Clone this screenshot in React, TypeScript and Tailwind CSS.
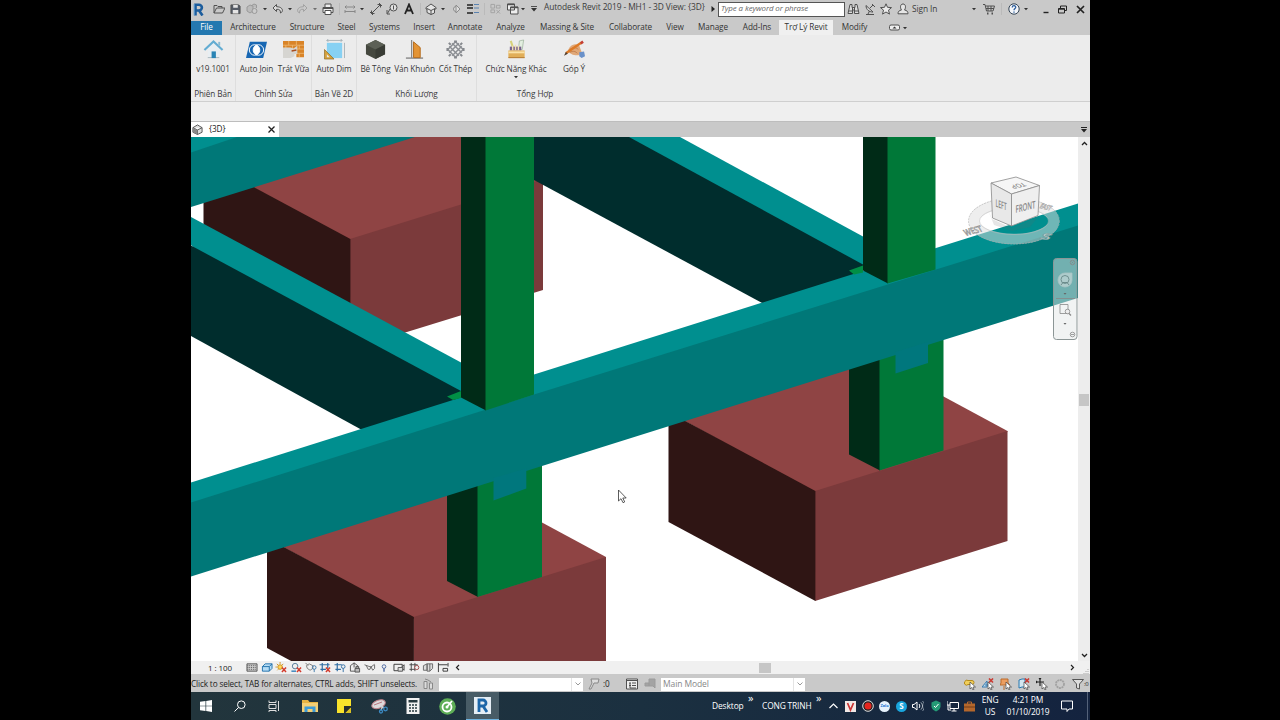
import type { ReactNode } from "react";
import clsx from "clsx";

interface IconProps {
  className?: string;
  children?: ReactNode;
  box?: string;
}

// Line icon on a 12x12 grid
function Icon({ className, children, box = "0 0 12 12" }: IconProps) {
  return (
    <svg className={clsx("shrink-0", className)} viewBox={box} fill="none" stroke="#505050" strokeWidth="1">
      {children}
    </svg>
  );
}

function Caret({ className }: { className?: string }) {
  return (
    <Icon className={clsx("w-1 h-1", className)} box="0 0 4 4">
      <path d="M0 1h4L2 3.2z" fill="#333" stroke="none" />
    </Icon>
  );
}

function Divider({ className }: { className?: string }) {
  return <div className={clsx("w-px h-3 shrink-0 bg-[#bababa]", className)} />;
}

function TitleBar() {
  return (
    <div className="h-[18px] flex items-center bg-[#c9c9c9] text-[#3c3c3c]">
      <Icon className="w-[11px] h-[13px] ml-[2px]" box="0 0 11 13">
        <path d="M2.5 12.500V1.700H6a2.9 2.9 0 010 5.8H3M6 7.400L9.500 12.500" stroke="#1c5d9d" strokeWidth="2.6" />
        <path d="M1.200 1v11.500" stroke="#5b9bd2" />
      </Icon>
      <Icon className="w-3 h-3 ml-[9px]">
        <path d="M1 10V2.5h3l1 1h4V5M1 10l2.5-5H12l-2.5 5z" />
      </Icon>
      <Icon className="w-[11px] h-3 ml-[5px]">
        <path d="M1 1.5h8.5L11 3v8H1z" fill="#555b66" />
        <path d="M3.5 1.5h5v3h-5zM3 7h6v4H3z" fill="#e4e4e4" stroke="none" />
      </Icon>
      <Icon className="w-3 h-3 ml-[5px]">
        <path d="M1 4l3-2 3 1v5L4 10 1 8zM5 3l3-2 2.500 1v3" stroke="#999" fill="#bbb" />
        <circle cx="8.500" cy="8" r="2.500" stroke="#999" fill="#ccc" />
      </Icon>
      <Caret className="ml-[5px]" />
      <Icon className="w-3 h-3 ml-[5px]">
        <path d="M4.500 1.500L1 5l3.500 3.500V6.300c3-.3 4 .7 4 3.700C11.500 9 11.500 3.800 4.500 3.700z" fill="#ddd" />
      </Icon>
      <Caret className="ml-1" />
      <Icon className="w-3 h-3 ml-1">
        <path d="M7.500 1.500L11 5 7.500 8.500V6.300c-3-.3-4 .7-4 3.700C.500 9 .500 3.800 7.500 3.700z" stroke="#a2a2a2" />
      </Icon>
      <Caret className="ml-[5px] opacity-60" />
      <Icon className="w-3 h-3 ml-[5px]">
        <path d="M3 4V1h6v3M1 4.500h10v5H1z" fill="#eee" />
        <path d="M3 7.500h6v4H3z" fill="#fff" />
        <path d="M1 5.500h10" />
      </Icon>
      <Divider className="ml-[5px]" />
      <Icon className="w-3 h-3 ml-1">
        <path d="M1 4h10M1 8.500h10M2.500 2.500L1 4l1.500 1.500M9.500 2.500L11 4 9.500 5.500M1 7v3M11 7v3" stroke="#888" />
      </Icon>
      <Caret className="ml-1" />
      <Icon className="w-3 h-3 ml-1.5">
        <path d="M1.500 10.500l9-9M1.500 7.500v3h3M7.500 1.500h3v3M0 9l3 3M9 0l3 3" />
      </Icon>
      <Icon className="w-3 h-3 ml-1">
        <circle cx="7.500" cy="4.500" r="3.500" fill="#e2e2e2" />
        <path d="M7.500 2.500v4M4 6L1.500 10.500M1 7v4h3" />
      </Icon>
      <Icon className="w-2.5 h-3 ml-1.5" box="0 0 10 12">
        <path d="M1 11L5 1.500 9 11M2.500 7.500h5" stroke="#222" strokeWidth="1.800" />
      </Icon>
      <Divider className="ml-1.5" />
      <Icon className="w-3 h-3 ml-1">
        <path d="M1 4.500L6 1l5 3.500V6H9.500v4L6 11.500 2 9.500V6H1z" fill="#e4e4e4" />
        <path d="M2 5.500l4 2 4-2M6 7.500v4" />
      </Icon>
      <Caret className="ml-1" />
      <Icon className="w-2.5 h-3 ml-1.5" box="0 0 10 12">
        <path d="M5 2v8L9 6zM5 3.500a2.500 2.500 0 000 5" stroke="#8c8c8c" fill="#ddd" />
      </Icon>
      <Icon className="w-3 h-3 ml-1.5">
        <path d="M0 2h6M0 5h6M0 10h6" stroke="#222" strokeWidth="1.700" />
        <path d="M7 1.500h5M7 5h5M7 9.500h5" stroke="#5b83b0" />
      </Icon>
      <Divider className="ml-[5px]" />
      <Icon className="w-[11px] h-3 ml-[5px]">
        <path d="M1 1h4v4H1zM7 2h4v3H7zM1 7h4v3H1zM7 7l4 4M11 7l-4 4" stroke="#a2a2a2" />
      </Icon>
      <Icon className="w-[13px] h-3 ml-[5px]">
        <path d="M1 1h7v6H1zM4 4h7.500v7H4z" fill="#eee" />
        <path d="M1 1.500h7M4 4.500h7.500" strokeWidth="1.600" />
      </Icon>
      <Caret className="ml-0.5" />
      <Icon className="w-1.5 h-1.5 ml-1.5" box="0 0 6 6">
        <path d="M0 .5h6" />
        <path d="M0 2h6L3 5.500z" fill="#333" stroke="none" />
      </Icon>
      <div className="w-[161px] ml-[7px] shrink-0 pb-[3px] text-[8.4px] whitespace-nowrap">Autodesk Revit 2019 - MH1 - 3D View: {"{3D}"}</div>
      <Icon className="w-1 h-1.5 ml-1.5" box="0 0 4 6">
        <path d="M.5 0v6L4 3z" fill="#222" stroke="none" />
      </Icon>
      <div className="w-[127px] h-[15px] ml-[3px] shrink-0 flex items-center bg-white border border-[#555] pl-0.5 text-[7.9px] italic text-[#666]">
        Type a keyword or phrase
      </div>
      <Icon className="w-[13px] h-3 ml-0.5">
        <path d="M2.500 1.500h2v3h3v-3h2L11.500 10.500H7V7H5v3.500H.5zM5 5v2M7 5v2M1 8h4M7 8h4" fill="#ddd" />
      </Icon>
      <Icon className="w-3 h-3 ml-1">
        <path d="M2 2.500c0 4 3 6.500 7 6.500zM2 11.500h8M5.500 8L4 11M6 5l3-3M8 1l3 3" fill="#ddd" />
      </Icon>
      <Icon className="w-3 h-3 ml-1">
        <path d="M6 .8l1.500 3.500 4 .3-3 2.500 1 4L6 9l-3.500 2.100 1-4-3-2.500 4-.3z" fill="#ececec" />
      </Icon>
      <Icon className="w-3 h-3 ml-[5px]">
        <path d="M6 1C3 1 3 5 4.500 7 2 7.500 1 8.500 1 10.800h10C11 8.500 10 7.500 7.500 7 9 5 9 1 6 1z" fill="#e6e6e6" />
      </Icon>
      <div className="w-[60px] ml-[3px] shrink-0 text-[8.400px]">Sign In</div>
      <Caret />
      <Icon className="w-3 h-3 ml-[7px]">
        <path d="M0 1.500h2l1.500 6.500H10l1.500-5h-9M3 5.500h8M5 3v5M8 3v5" />
        <path d="M4 10.500h1.500M8.500 10.500H10" strokeWidth="1.800" />
      </Icon>
      <Divider className="ml-1.5" />
      <Icon className="w-3 h-3 ml-1.5">
        <circle cx="6" cy="6" r="5.200" fill="#f4f6fa" stroke="#345" />
        <path d="M4.200 4.500C4.300 2 8 2.200 7.700 4.500 7.600 5.500 6 5.800 6 7.300M6 8.500v1.300" stroke="#2d5f9e" strokeWidth="1.300" />
      </Icon>
      <Caret className="ml-1" />
      <Icon className="w-2 h-3 ml-[14px]" box="0 0 8 12">
        <path d="M1.500 9.500h5" stroke="#222" strokeWidth="1.400" />
      </Icon>
      <Icon className="w-[9px] h-[9px] ml-2" box="0 0 9 9">
        <path d="M2.500 3V1h6v4.500h-2M.5 3.500h6V8h-6zM.5 4.200h6" stroke="#222" />
      </Icon>
      <Icon className="w-[9px] h-[9px] ml-[9px]" box="0 0 9 9">
        <path d="M1 1l7 7M8 1L1 8" stroke="#222" strokeWidth="1.700" />
      </Icon>
    </div>
  );
}

const tabs = [
  { label: "Architecture", width: "w-[60px]" },
  { label: "Structure", width: "w-[48px]" },
  { label: "Steel", width: "w-[31px]" },
  { label: "Systems", width: "w-[45px]" },
  { label: "Insert", width: "w-[34px]" },
  { label: "Annotate", width: "w-[48px]" },
  { label: "Analyze", width: "w-[43px]" },
  { label: "Massing & Site", width: "w-[70px]" },
  { label: "Collaborate", width: "w-[57px]" },
  { label: "View", width: "w-[32px]" },
  { label: "Manage", width: "w-[44px]" },
  { label: "Add-Ins", width: "w-[44px]" },
  { label: "Trợ Lý Revit", width: "w-[54px]", active: true },
  { label: "Modify", width: "w-[43px]" },
];

function RibbonTabs() {
  return (
    <div className="h-[17px] flex items-end bg-[#c9c9c9] text-[8.2px] text-[#333]">
      <div className="w-[31px] h-[14px] mr-px pb-px flex items-center justify-center bg-[#2478b0] text-white">File</div>
      {tabs.map((tab) => (
        <div
          key={tab.label}
          className={clsx(
            "flex shrink-0 items-center justify-center whitespace-nowrap",
            tab.width,
            tab.active ? "h-[15px] bg-[#f0f0f0]" : "h-[14px] pb-px",
          )}
        >
          {tab.label}
        </div>
      ))}
      <Icon className="w-[11px] h-[14px] ml-[13px]" box="0 0 11 14">
        <rect x=".5" y="4" width="10" height="5" rx="1.500" fill="#eee" />
        <path d="M3.500 7.500h4l-2-2z" fill="#333" stroke="none" />
      </Icon>
      <Caret className="ml-[3px] mb-[5px]" />
    </div>
  );
}

function RibbonButton({ label, width, caret, children }: { label: string; width: string; caret?: boolean; children: ReactNode }) {
  return (
    <div className={clsx("flex flex-col items-center shrink-0", width)}>
      <svg className="w-[21px] h-[21px] mb-px" viewBox="0 0 22 22" fill="none">
        {children}
      </svg>
      <div className="h-3 mt-[2px] leading-3 whitespace-nowrap">{label}</div>
      {caret && <Caret />}
    </div>
  );
}

function RibbonPanel({ title, width, last, children }: { title: string; width: string; last?: boolean; children: ReactNode }) {
  return (
    <div className={clsx("h-full flex flex-col justify-between pt-1", width, !last && "border-r border-[#dedede]")}>
      <div className="flex justify-center">{children}</div>
      <div className="text-center leading-[14px] whitespace-nowrap">{title}</div>
    </div>
  );
}

function Ribbon() {
  return (
    <>
      <div className="h-[67px] flex bg-[#ececec] border-b border-[#cfcfcf] text-[8.2px] text-[#3a3a3a]">
        <RibbonPanel title="Phiên Bản" width="w-[45px]">
          <RibbonButton label="v19.1001" width="w-10">
            <path d="M5 10v10h12V10l-6-6z" fill="#e8eef2" />
            <path d="M5 19.500h12" stroke="#a7b4bb" />
            <path d="M1.500 11.500L11 2.500l9.500 9" stroke="#62acd2" strokeWidth="2.200" />
            <path d="M9 13h4.500v7H9z" fill="#2984b5" />
            <path d="M16 3h2v4h-2z" fill="#8bbad2" />
          </RibbonButton>
        </RibbonPanel>
        <RibbonPanel title="Chỉnh Sửa" width="w-[76px]">
          <RibbonButton label="Auto Join" width="w-10">
            <path d="M4 3h18l-4 17H0z" fill="#1767b3" />
            <circle cx="9" cy="11.500" r="5.500" fill="#1767b3" stroke="#fff" />
            <circle cx="13" cy="11.500" r="5.500" stroke="#fff" />
            <path d="M11 6c4.500 3 4.500 8 0 11-4.500-3-4.500-8 0-11z" fill="#fff" />
          </RibbonButton>
          <RibbonButton label="Trát Vữa" width="w-[34px]">
            <path d="M0 2h22v17h-8v-5H0z" fill="#d98428" />
            <path d="M0 6.500h22M0 10.500h22M10 15h12M6 2v4.500M14 2v4.500M3 6.500v4M10 6.500v4M17 6.500v4M17 15v4" stroke="#f0bd78" strokeWidth=".8" />
            <path d="M0 9h8l3 1 4-3v9l-3-1v3l-4 2H0z" fill="#d6d5d1" />
            <path d="M9 12.500l5-1" stroke="#a84d20" strokeWidth="1.500" />
          </RibbonButton>
        </RibbonPanel>
        <RibbonPanel title="Bản Vẽ 2D" width="w-[45px]">
          <RibbonButton label="Auto Dim" width="w-10">
            <path d="M3 4h16v16H3z" fill="#87d1f3" />
            <path d="M3 1.500h16M4.500 0L3 1.500 4.500 3M17.500 0L19 1.500 17.500 3M21.500 4v16" stroke="#8d9ba2" strokeWidth=".7" />
            <path d="M.5 11v10h10z" fill="#d4a13c" stroke="#8b6824" strokeWidth=".7" />
            <path d="M3 16v3h3z" fill="#ececec" />
          </RibbonButton>
        </RibbonPanel>
        <RibbonPanel title="Khối Lượng" width="w-[120px]">
          <RibbonButton label="Bê Tông" width="w-[37px]">
            <path d="M11 1l10 5v10l-10 5-10-5V6z" fill="#45483f" />
            <path d="M1 6l10 5 10-5-10-5z" fill="#5c6056" />
            <path d="M11 11v10l10-5V6z" fill="#393c35" />
          </RibbonButton>
          <RibbonButton label="Ván Khuôn" width="w-[41px]">
            <path d="M8 1v19" stroke="#888" strokeWidth="1.300" />
            <path d="M2 20h18" stroke="#888" strokeWidth="1.500" />
            <path d="M10 3l7 6v10.500h-7z" fill="#e39435" stroke="#b36b1c" />
          </RibbonButton>
          <RibbonButton label="Cốt Thép" width="w-[41px]">
            <path d="M11 3l8 8-8 8-8-8zM7.500 4.500l10 10M4.500 7.500l10 10M14.500 4.500l-10 10M17.500 7.500l-10 10" stroke="#8b8e93" strokeWidth="1.500" />
            <path d="M9.500 2.500h3M9.500 19.500h3M2.500 9.500v3M19.500 9.500v3M4 4l2 2M18 4l-2 2M4 18l2-2M18 18l-2-2" stroke="#85888d" strokeWidth="2" />
          </RibbonButton>
        </RibbonPanel>
        <RibbonPanel title="Tổng Hợp" width="w-[116px]" last>
          <RibbonButton label="Chức Năng Khác" width="w-[78px]" caret>
            <path d="M5 2l3 9" stroke="#d8d17a" strokeWidth="2.200" />
            <path d="M14 2l4.500-1-1.500 10h-4z" fill="#e3eee0" stroke="#8aa68a" strokeWidth=".6" />
            <path d="M4 8h12v4H4z" fill="#77628c" />
            <path d="M7 7v5M10 6v6M13 7v5" stroke="#f1dfb4" strokeWidth="1.500" />
            <path d="M2.500 12h17v8h-17z" fill="#e1ae58" />
            <path d="M2.500 14h17" stroke="#fae2a8" strokeWidth="2" />
            <path d="M2.500 19.500h17" stroke="#b57b35" />
          </RibbonButton>
          <RibbonButton label="Góp Ý" width="w-[38px]">
            <path d="M4 12c3-6 7-8 12-5l3 8-4 2c-4 0-8 0-11-5z" fill="#e0a878" />
            <path d="M6 11c4-3 7-2 9 0M6 14c4-2 6-1 8 1" stroke="#b9733f" strokeWidth=".8" />
            <path d="M2 15L18 4" stroke="#dd7a26" strokeWidth="2.500" />
            <path d="M17.500 4.500l2.500-1.700" stroke="#c43e34" strokeWidth="2.800" />
            <path d="M0 17.500l2-4 2 2z" fill="#4b3a2b" />
            <path d="M16 14l5-1 1 5-3.500 2-2.500-2z" fill="#6a91c9" />
          </RibbonButton>
        </RibbonPanel>
      </div>
      <div className="h-[19px] bg-[#efefef]" />
    </>
  );
}

function ViewTabs() {
  return (
    <div className="h-4 flex items-center bg-[#c9c9c9] border-t border-[#bdbdbd]">
      <div className="w-[88px] h-full flex items-center bg-white text-[8.2px] text-[#222]">
        <Icon className="w-[11px] h-[11px] ml-[1px]">
          <path d="M1 4l5-3 5 3v5l-5 2.500L1 9zM1 4l5 2.500L11 4M6 6.500v5" fill="#ddd" />
          <path d="M1 4l5 2.500v5L1 9z" fill="#888" stroke="none" />
        </Icon>
        <div className="w-[59px] ml-[6px] font-medium">{"{3D}"}</div>
        <Icon className="w-[7px] h-[7px]" box="0 0 7 7">
          <path d="M.5.5l6 6M6.500.5l-6 6" stroke="#222" strokeWidth="1.300" />
        </Icon>
      </div>
      <Icon className="w-[6px] h-[6px] ml-auto mr-[3px]" box="0 0 6 6">
        <path d="M0 .5h6" stroke="#222" />
        <path d="M0 2h6L3 5.500z" fill="#222" stroke="none" />
      </Icon>
    </div>
  );
}

function Viewport() {
  return (
    <svg className="w-[887px] h-[524px] shrink-0 bg-white" viewBox="191 137 887 524">
      {/* rear footing */}
      <path d="M203.500 160L350 241l193-60V179L396 100z" fill="#8f4444" />
      <path d="M350 239l193-60v111l-193 59.500z" fill="#7b3a3b" />
      <path d="M203.500 160L350.400 239v110l-146.900-79z" fill="#2f1514" />
      {/* rear beam */}
      <path d="M191 137h224L191 207z" fill="#007878" />
      <path d="M191 137h46l-46 15.500z" fill="#008f8f" />
      {/* left cross beam */}
      <path d="M191 217l271 146v45l-60 20L191 245z" fill="#008f8f" />
      <path d="M191 245.500L461 391v20l-99 19L191 336z" fill="#002d2d" />
      {/* right cross beam */}
      <path d="M626 137h54l183 99.500V275z" fill="#008f8f" />
      <path d="M534 137h95l234 127.500V275l-99 29-230-124z" fill="#002d2d" />
      {/* front footings */}
      <path d="M267 538l146.500 81L606 558V557l-146.500-79z" fill="#8f4444" />
      <path d="M413.500 617L606 557v110H413.500z" fill="#7b3a3b" />
      <path d="M267 538l146.900 79v110L267 648z" fill="#2f1514" />
      <path d="M668.500 412L815 493l192.500-61V431L861 352z" fill="#8f4444" />
      <path d="M815 491l192.500-60v110L815 601z" fill="#7b3a3b" />
      <path d="M668.500 412L815.400 491v110l-146.900-79z" fill="#2f1514" />
      {/* lower columns */}
      <path d="M447 480h31v117l-31-16z" fill="#002b17" />
      <path d="M477.500 460H542v117l-64.500 20z" fill="#007838" />
      <path d="M849 350h31v120.500l-31-16z" fill="#002b17" />
      <path d="M879.500 330h64v120.500l-64 20z" fill="#007838" />
      {/* main beam */}
      <path d="M191 482.500l343-108L936 248l142-44.500V240L191 520z" fill="#008f8f" />
      <path d="M191 502.500l343-108L936 269.500l142-44v72.500L943.500 340 542 466 191 576.500z" fill="#007878" />
      <path d="M493.500 478v22.500l32.800-12v-20zM895.500 352v21.500l32.500-10.500v-21z" fill="#00777d" />
      <path d="M447 396.500l14-5.500v7l-8 2zM849 270.500l14-5v7l-9 2z" fill="#008f45" />
      {/* upper columns */}
      <path d="M461 137h25v273.500l-25-13z" fill="#002b17" />
      <path d="M485.500 137H534v257.500l-48.500 16z" fill="#007838" />
      <path d="M863 137h25v146.500l-25-13z" fill="#002b17" />
      <path d="M887.500 137h48v132.500l-48 14z" fill="#007838" />

      {/* view cube */}
      <ellipse cx="1014" cy="221" rx="40" ry="18" stroke="#ddd" strokeWidth="10.500" strokeOpacity=".5" fill="none" />
      <ellipse cx="1014" cy="221" rx="45.500" ry="23" stroke="#aaa" strokeWidth=".6" fill="none" strokeDasharray="2 1" />
      <ellipse cx="1014" cy="221" rx="34.500" ry="13.500" stroke="#bbb" strokeWidth=".5" fill="none" />
      <path d="M988 210l4 9 20 9 26-11-8 10-18 4-18-6z" fill="#666" fillOpacity=".16" />
      <g stroke="#8a8a8a" strokeWidth=".8" strokeLinejoin="round">
        <path d="M991 183l25-6 23.500 8.500-28 8.500z" fill="#f6f6f6" />
        <path d="M991 183l20.500 11v32l-19-8z" fill="#e8e8e8" />
        <path d="M1011.500 194l28-8.500-1.500 30-26.500 10.500z" fill="#efefef" />
      </g>
      <g fill="#888" fontSize="9" fontWeight="600" fontFamily="Open Sans, sans-serif">
        <text transform="matrix(.58 .2 0 1.150 995.500 206.500)">LEFT</text>
        <text transform="matrix(.68 -.17 0 1.150 1015.500 213)">FRONT</text>
        <text transform="matrix(-.75 .17 -.6 -.55 1023 182.500)">TOP</text>
        <text transform="matrix(.75 -.2 .5 .9 966 236)" fill="#ccc" stroke="#888" strokeWidth=".5">WEST</text>
        <text transform="matrix(.6 .14 -.5 .8 1039 208)" fontSize="8" fill="#ccc" stroke="#999" strokeWidth=".4">EAST</text>
        <text transform="matrix(2 .3 -.7 .85 1039 238.500)" fill="#c8dcdc" stroke="#7b9a9a" strokeWidth=".5">S</text>
      </g>

      {/* navigation bar */}
      <rect x="1053.500" y="258.500" width="23.500" height="81" rx="3" fill="#e4e8e8" fillOpacity=".5" stroke="#8c9696" />
      <g fill="none" stroke="#888" strokeWidth=".8">
        <circle cx="1072.500" cy="262.500" r="2.300" />
        <path d="M1071.500 261.500l2 2M1073.500 261.500l-2 2" />
        <path d="M1065 273h7v7a7 7 0 11-7-7z" fill="#c8d8d8" fillOpacity=".7" stroke="#a9c4c4" />
        <circle cx="1065" cy="279.500" r="4" stroke="#5f8080" />
        <path d="M1061 285l2-2.500h4l2 2.500" stroke="#5f8080" />
        <path d="M1056 298.500h19M1060 304.500h8v9h-8z" />
        <circle cx="1067.500" cy="311.500" r="2.300" fill="#eee" />
        <path d="M1069 313.500l2 2" strokeWidth="1.300" />
        <circle cx="1072.500" cy="334.500" r="2.300" />
        <path d="M1071 334.500h3" />
      </g>
      <path d="M1063.500 293h3l-1.500 1.800zM1063.500 323h3l-1.500 1.800z" fill="#666" />

      {/* cursor */}
      <path d="M618.500 490v11l2.500-2.300 2 4 1.700-.8-1.900-3.900h3.400z" fill="#fff" stroke="#333" strokeWidth=".8" />
    </svg>
  );
}

function VerticalScroll() {
  return (
    <div className="flex-1 flex flex-col items-center justify-between bg-[#ededed] pt-1 pb-[3px]">
      <Icon className="w-[7px] h-[5px]" box="0 0 7 5">
        <path d="M1 4l2.500-2.500L6 4" stroke="#222" strokeWidth="1.300" />
      </Icon>
      <div className="w-2.5 h-3 bg-[#c6c6c6]" />
      <Icon className="w-[7px] h-[5px]" box="0 0 7 5">
        <path d="M1 1l2.500 2.500L6 1" stroke="#222" strokeWidth="1.300" />
      </Icon>
    </div>
  );
}

const redX = <path d="M7 6l4.500 5M11.500 6L7 11" stroke="#d33a2b" strokeWidth="1.600" />;

function ViewControls() {
  return (
    <div className="h-[13px] flex items-center bg-[#f0f0f0] text-[8px] text-[#222]">
      <div className="w-[38px] ml-[17px] shrink-0 whitespace-nowrap">1 : 100</div>
      <div className="flex gap-[2.700px]">
        <Icon className="w-3 h-[11px]">
          <path d="M.5 2h11v8H.5z" fill="#ccc" />
          <path d="M1 4h10M1 6h10M1 8h10" stroke="#555" strokeDasharray="1 1" />
        </Icon>
        <Icon className="w-3 h-[11px]">
          <path d="M1 5l3-3h7.500v5l-3 3H1zM1 5h7.500v5M8.500 5l3-3" fill="#b5dcf5" stroke="#1f6eaa" />
        </Icon>
        <Icon className="w-3 h-[11px]">
          <circle cx="5" cy="5.500" r="2.500" fill="#ffd65a" stroke="#c98b15" />
          <path d="M5 0v2M0 5.500h1.500M1.500 2L3 3.500M8.500 2L7 3.500M2 9l1-1" stroke="#c98b15" />
          {redX}
        </Icon>
        <Icon className="w-3 h-[11px]">
          <circle cx="5" cy="4.500" r="3" stroke="#4d7596" />
          <path d="M1 10h5" stroke="#2c7cb8" strokeWidth="1.500" />
          {redX}
        </Icon>
        <Icon className="w-3 h-[11px]">
          <path d="M1 4l3-2 4 2v3l-3 2-3-2zM0 1l3 3" stroke="#777" />
          <circle cx="9.500" cy="6" r="2" stroke="#3b76a8" />
          <path d="M9.500 8v3" stroke="#3b76a8" />
        </Icon>
        <Icon className="w-3 h-[11px]">
          <path d="M3 1v9M0 3h11M9 1v6M1 8h6" stroke="#2f6da3" strokeWidth="1.300" />
          {redX}
        </Icon>
        <Icon className="w-3 h-[11px]">
          <path d="M3 1v9M0 3h8M1 8h6" stroke="#2f6da3" strokeWidth="1.300" />
          <circle cx="9.500" cy="5" r="2" stroke="#2f6da3" />
          <path d="M9.500 7v4" stroke="#2f6da3" />
        </Icon>
        <Icon className="w-3 h-[11px]">
          <path d="M1 4l4-3 4 3v6H1zM5 1v5" fill="#eee" />
          <path d="M6 7h5v4H6zM7 7V5h3v2" fill="#bbb" />
        </Icon>
        <Icon className="w-3 h-[11px]">
          <path d="M0 3l4 1.500 3 1 4-3M2 4l2 4h2l1-3M7 5l2 4 2-2V3" stroke="#666" />
        </Icon>
        <Icon className="w-3 h-[11px]">
          <circle cx="6" cy="5" r="2" stroke="#4a67a0" />
          <path d="M6 7v3.500" stroke="#4a67a0" strokeWidth="1.500" />
        </Icon>
        <Icon className="w-3 h-[11px]">
          <path d="M.5 2.500h9v7h-9zM9.500 5l2-2v6l-2-2" stroke="#333" />
          <path d="M5 6h5v4H5z" fill="#ddd" stroke="#555" />
        </Icon>
        <Icon className="w-3 h-[11px]">
          <path d="M1 3h9M3 1v9M7 1v9M1 8h6" stroke="#444" />
          <circle cx="9" cy="6" r="2.300" fill="#eee" stroke="#9a4545" />
        </Icon>
        <Icon className="w-3 h-[11px]">
          <path d="M1 4l4-2v7H1zM5 2h6v5L8 10H5zM8 2v8" stroke="#666" fill="#ddd" />
        </Icon>
        <Icon className="w-3 h-[11px]">
          <path d="M1 1v10M11.500 1v4M1 3h10M6 7h5v3H6z" stroke="#333" />
        </Icon>
      </div>
      <Icon className="w-[5px] h-[7px] ml-[6px]" box="0 0 5 7">
        <path d="M4 1L1.500 3.500 4 6" stroke="#222" strokeWidth="1.200" />
      </Icon>
      <div className="w-3 h-2.5 ml-[299px] shrink-0 bg-[#c6c6c6]" />
      <Icon className="w-[5px] h-[7px] ml-auto mr-2" box="0 0 5 7">
        <path d="M1 1l2.500 2.500L1 6" stroke="#222" strokeWidth="1.200" />
      </Icon>
      <Icon className="w-[6px] h-[6px] mr-[1px] self-end" box="0 0 6 6">
        <path d="M5 1v5M3 3v3M1 5v1" stroke="#aaa" strokeDasharray="1 1" />
      </Icon>
    </div>
  );
}

function Combo({ className, text }: { className?: string; text?: string }) {
  return (
    <div className={clsx("w-[144px] h-[13px] shrink-0 flex items-center justify-between bg-white pl-0.5 text-[#888]", className)}>
      <span className="text-[8.5px]">{text}</span>
      <div className="w-3 h-full flex items-center justify-center border-l border-[#e4e4e4]">
        <Icon className="w-[6px] h-1" box="0 0 6 4">
          <path d="M.5.5L3 3 5.500.5" stroke="#999" />
        </Icon>
      </div>
    </div>
  );
}

const pointer = <path d="M6 4v7l1.700-1.500L9 12l1-.5L9 9h2.500z" fill="#fff" stroke="#444" strokeWidth=".7" />;

function StatusBar() {
  return (
    <div className="h-[18px] pt-[2px] flex items-center bg-[#c9c9c9] text-[8.2px] text-[#222]">
      <div className="w-[231px] shrink-0 whitespace-nowrap tracking-[-0.130px]">Click to select, TAB for alternates, CTRL adds, SHIFT unselects.</div>
      <Icon className="w-3 h-3">
        <path d="M2 3.500h3v7H2zM7.500 5h3v6h-3zM3 1l3 1 3 2" stroke="#888" fill="#ddd" />
      </Icon>
      <Combo className="ml-[5px]" />
      <Icon className="w-3 h-3 ml-[5px]">
        <path d="M3 1h8l-1 4H6L3 11H1l3-6z" stroke="#888" fill="#ddd" />
      </Icon>
      <div className="w-[23px] ml-[3px] shrink-0">:0</div>
      <Icon className="w-3 h-3">
        <path d="M.5 1h11v10H.5z" fill="#eee" />
        <path d="M.5 2.500h11M3 5h2M6 5h4M3 7.500h2M6 7.500h4M4 5v5h6" />
      </Icon>
      <Icon className="w-3 h-3 ml-[6px]">
        <path d="M1 5h4v3H1zM5 1h6v9L9 8H5z" stroke="#9b9b9b" fill="#a3a3a3" />
      </Icon>
      <Combo className="ml-[5px]" text="Main Model" />
      <div className="ml-auto flex items-center gap-1.5">
        <Icon className="w-3 h-3">
          <path d="M1 3.500a2 2 0 013-1h4a2 2 0 010 4H4a2 2 0 01-3-3z" stroke="#b58b1c" fill="#f1cf5b" />
          {pointer}
        </Icon>
        <Icon className="w-3 h-3">
          <path d="M0 9l5-6v6zM3 7h4" stroke="#3c7daf" fill="#b8d9ee" />
          <path d="M7 .5l4 4M11 .5l-4 4" stroke="#c93b33" strokeWidth="1.600" />
          {pointer}
        </Icon>
        <Icon className="w-3 h-3">
          <path d="M1 1h7v4l2 2H0l1-2zM4 8v4" stroke="#bc6b2b" fill="#ed9f61" />
          {pointer}
        </Icon>
        <Icon className="w-3 h-3">
          <path d="M1 2l3-1h3v8H4l-3 1z" stroke="#2878b0" fill="#d3e6f0" />
          <path d="M7 .5l4 4M11 .5l-4 4" stroke="#c93b33" strokeWidth="1.600" />
          {pointer}
        </Icon>
        <Icon className="w-3 h-3">
          <path d="M4 0v8M0 4h8M3 1l1-1 1 1M1 3L0 4l1 1" stroke="#222" strokeWidth="1.200" />
          {pointer}
        </Icon>
        <Icon className="w-3 h-3">
          <circle cx="6" cy="6" r="4" stroke="#a2a2a2" strokeWidth="1.800" strokeDasharray="2 .6" />
        </Icon>
        <Icon className="w-3 h-3">
          <path d="M.5 1.500h11L7.500 6v5l-3-1V6z" stroke="#555" fill="#ddd" />
        </Icon>
      </div>
      <div className="w-[6px] shrink-0 text-[6px] tracking-[-0.300px]">:0</div>
    </div>
  );
}

function Taskbar() {
  return (
    <div className="h-7 flex items-center bg-linear-to-r from-[#22353c] via-[#1b3040] to-[#14233f] text-[8.4px] text-white">
      <Icon className="w-3 h-3 ml-[9px]">
        <path d="M0 1.700L5.500 1v4.700H0zM6.200.9L12 0v5.700H6.200zM0 6.300h5.500V11L0 10.300zM6.200 6.300H12V12l-5.800-.9z" fill="#fff" stroke="none" />
      </Icon>
      <Icon className="w-3 h-3 ml-[22px]">
        <circle cx="7.300" cy="4.700" r="3.800" stroke="#fff" />
        <path d="M4.500 7.500L.5 11.500" stroke="#fff" />
      </Icon>
      <Icon className="w-3 h-3 ml-[22px]">
        <path d="M1 .5v2h7v-2M1 4.500h7v4H1zM1 12v-1.500h7V12M10.500 1v10M10.500 3.500v2" stroke="#ddd" />
      </Icon>
      <Icon className="w-4 h-4 ml-[22px]" box="0 0 16 16">
        <path d="M0 2h6l1.500 2H16v10H0z" fill="#e7b342" stroke="none" />
        <path d="M0 5h16v9H0z" fill="#f3cf75" stroke="none" />
        <path d="M2.500 14V8.500h11V14h-3v-3h-5v3z" fill="#3d9bd7" stroke="none" />
      </Icon>
      <Icon className="w-[14px] h-[14px] ml-[19px]" box="0 0 14 14">
        <path d="M0 0h14v14H0z" fill="#fae32b" stroke="none" />
        <path d="M7 7h7v1.500L8.500 14H7z" fill="#292e2e" stroke="none" />
        <path d="M8.500 14L14 8.500V14z" fill="#d9c122" stroke="none" />
      </Icon>
      <Icon className="w-[17px] h-4 ml-5" box="0 0 17 16">
        <ellipse cx="7.500" cy="6" rx="7" ry="4" fill="#ddd9dc" stroke="#c08089" transform="rotate(-20 8 6)" />
        <path d="M3 7l8-3" stroke="#b9757e" />
        <path d="M9 8l4 2M12 8l-2 4" stroke="#cfd5da" strokeWidth="1.300" />
        <circle cx="14.500" cy="11" r="1.800" stroke="#3c89c2" strokeWidth="1.300" />
        <circle cx="10" cy="13.500" r="1.500" stroke="#3c89c2" strokeWidth="1.300" />
      </Icon>
      <Icon className="w-[14px] h-4 ml-[18px]" box="0 0 14 16">
        <path d="M.5 0h13v16H.5z" fill="#f1f1f1" stroke="none" />
        <path d="M2.500 2h9v2.500h-9z" fill="#26383e" stroke="none" />
        <path d="M3 7h8M3 10h8M3 13h8" stroke="#26383e" strokeWidth="1.700" strokeDasharray="2 1" />
      </Icon>
      <Icon className="w-[17px] h-[17px] ml-[19px]" box="0 0 17 17">
        <circle cx="8.500" cy="8.500" r="8.300" fill="#5eae56" stroke="none" />
        <circle cx="8" cy="9" r="4.500" stroke="#fff" strokeWidth="1.800" />
        <path d="M8 9l5-6" stroke="#fff" strokeWidth="1.800" />
        <circle cx="8" cy="9" r="1.500" fill="#fff" stroke="none" />
      </Icon>
      <div className="w-[33px] h-full ml-[10px] flex items-center justify-center bg-[#485c66] border-b border-[#6eb3df]">
        <Icon className="w-[17px] h-[17px]" box="0 0 17 17">
          <path d="M0 0h17v17H0z" fill="#e5eef5" stroke="none" />
          <path d="M5 15V3h4a3 3 0 010 6H5M9 9l4 6" stroke="#1c66a8" strokeWidth="2.800" />
        </Icon>
      </div>
      <div className="w-[35px] ml-[213px] shrink-0">Desktop</div>
      <div className="w-[15px] shrink-0 pl-px pb-[17px] text-[11px] leading-none">»</div>
      <div className="w-[53px] shrink-0 whitespace-nowrap tracking-[-0.150px]">CONG TRINH</div>
      <div className="w-[14px] shrink-0 pl-px pb-[17px] text-[11px] leading-none">»</div>
      <Icon className="w-[9px] h-[6px]" box="0 0 9 6">
        <path d="M.5 5l4-4 4 4" stroke="#fff" strokeWidth="1.200" />
      </Icon>
      <Icon className="w-[11px] h-[11px] ml-[7px]" box="0 0 11 11">
        <path d="M0 0h11v11H0z" fill="#f2e9e6" stroke="none" />
        <path d="M2.500 2l3 7 3-7" stroke="#c93434" strokeWidth="1.700" />
      </Icon>
      <Icon className="w-3 h-3 ml-[6px]">
        <circle cx="6" cy="6" r="5.300" stroke="#ddd" fill="#222" />
        <circle cx="6" cy="6" r="3.500" fill="#e3251e" stroke="none" />
      </Icon>
      <div className="w-[11px] h-[11px] ml-[5px] shrink-0 rounded-full bg-[#e6f2fc] flex items-center justify-center text-[4px] font-bold text-[#1573d1]">Zalo</div>
      <div className="w-[11px] h-[11px] ml-[6px] shrink-0 rounded-full bg-[#1aa5dd] flex items-center justify-center text-[8px] font-bold">S</div>
      <Icon className="w-3 h-3 ml-[5px]">
        <path d="M.5 4.500H2L5 2v8L2 7.500H.5zM7 4c1 1 1 3 0 4" stroke="#fff" />
        <path d="M9 2.500c2 2 2 5 0 7" stroke="#c1c8d0" />
        <path d="M10.500 1c3 3 2 8 0 10" stroke="#8592a0" />
      </Icon>
      <Icon className="w-[10px] h-3 ml-[7px]" box="0 0 10 12">
        <path d="M5 .5l4.500 2v4c0 2-2 4-4.500 5C2.500 10.500.5 8.500.5 6.500v-4z" fill="#249a76" stroke="none" />
        <path d="M3 6l1.500 1.500L7.500 4" stroke="#fff" />
      </Icon>
      <Icon className="w-3 h-3 ml-[6px]">
        <path d="M3 2.500h8.500v6H3zM7 8.500V11M4.500 11h5M0 1v4h3M1 5v5h3" stroke="#fff" />
      </Icon>
      <Icon className="w-[11px] h-[11px] ml-[5px]" box="0 0 11 11">
        <path d="M0 2.500h11v8H0z" fill="#b4672c" stroke="none" />
        <path d="M3.500 3V1h4v2" stroke="#b4672c" />
        <path d="M0 6h11" stroke="#713c18" />
      </Icon>
      <div className="w-[30px] shrink-0 text-center leading-[12px]">
        ENG
        <br />
        US
      </div>
      <div className="w-[46px] shrink-0 text-center leading-[12px] whitespace-nowrap tracking-[-0.150px]">
        4:21 PM
        <br />
        01/10/2019
      </div>
      <Icon className="w-3 h-3 ml-[10px]">
        <path d="M.5 1h11v8H8l-2 2.500V9H.5z" stroke="#fff" />
      </Icon>
      <div className="w-px h-full ml-auto mr-[2px] bg-[#54627a]" />
    </div>
  );
}

export default function App() {
  return (
    <div className="w-[1280px] h-[720px] flex justify-center overflow-hidden bg-black">
      <div className="w-[900px] h-full flex flex-col pl-px bg-black font-['Open_Sans','Noto_Sans',sans-serif] tracking-[-0.100px]">
        <TitleBar />
        <RibbonTabs />
        <Ribbon />
        <ViewTabs />
        <div className="h-[524px] flex">
          <Viewport />
          <VerticalScroll />
        </div>
        <ViewControls />
        <StatusBar />
        <Taskbar />
      </div>
    </div>
  );
}
